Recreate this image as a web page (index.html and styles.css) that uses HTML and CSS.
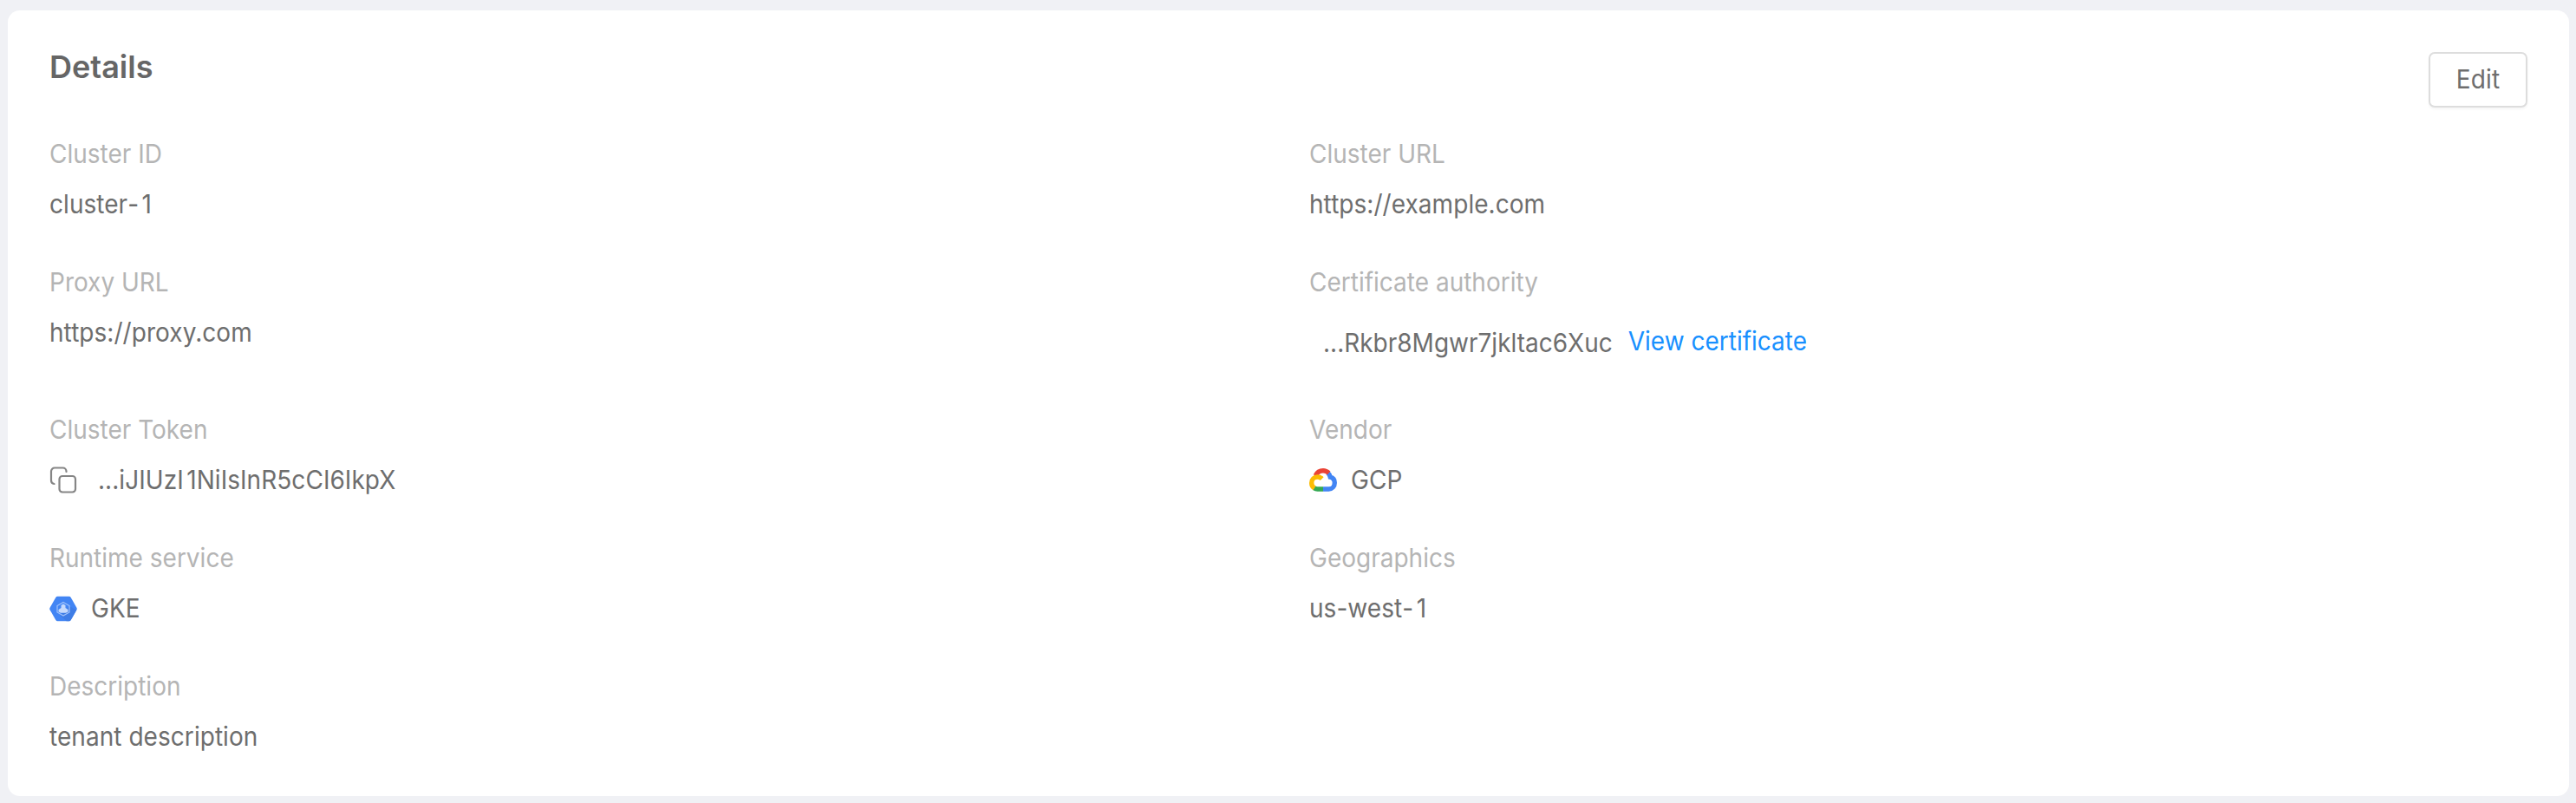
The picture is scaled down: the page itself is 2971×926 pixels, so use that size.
FILE: index.html
```html
<!DOCTYPE html>
<html lang="en">
<head>
<meta charset="utf-8">
<title>Details</title>
<link rel="stylesheet" href="styles.css">
</head>
<body>
<main class="card">
  <header class="card-header">
    <h1 class="title">Details</h1>
    <button class="edit-button" type="button"><span class="edit-label">Edit</span></button>
  </header>
  <dl class="details">
    <div class="field"><dt>Cluster ID</dt><dd><span>cluster<span class="loose">-</span>1</span></dd></div>
    <div class="field"><dt>Cluster URL</dt><dd><span>https://example.com</span></dd></div>
    <div class="field"><dt>Proxy URL</dt><dd><span>https://proxy.com</span></dd></div>
    <div class="field"><dt>Certificate authority</dt><dd class="certificate"><span class="certificate-value">...Rkbr8Mgwr7jkltac6Xuc</span><a class="link">View certificate</a></dd></div>
    <div class="field"><dt>Cluster Token</dt><dd class="token">
      <svg class="copy-icon" width="32" height="32" viewBox="0 0 32 32" fill="none" stroke="#858585" stroke-width="2.2" stroke-linecap="round">
        <path d="M19.500 6V5.500a4 4 0 0 0-4-4H6a4 4 0 0 0-4 4v10.500a4 4 0 0 0 3.500 4"/>
        <rect x="11.500" y="11" width="18.500" height="18.500" rx="3.500"/>
      </svg><span>...iJIUz<span class="loose">I</span>1NiIsInR5cCI6IkpX</span></dd></div>
    <div class="field"><dt>Vendor</dt><dd class="with-logo">
      <svg class="logo" width="32" height="32" viewBox="0 0 32 32" fill="none" stroke-width="5.400">
        <path stroke="#4285f4" d="M21.500 7.200C23 8.600 23.900 10.200 24.300 12.200C27.400 13 29.300 15.700 29.300 18.800C29.300 23 26.400 26 22.500 26H16"/>
        <path stroke="#34a853" d="M16 26H9.500C8 26 6.700 25.500 5.600 24.700"/>
        <path stroke="#ea4335" d="M7.200 10.500C8.900 6.900 12.100 4.700 16 4.700C18.700 4.700 20.700 5.700 22.600 7.500"/>
        <path stroke="#fbbc04" d="M6 24.900C3.900 23.600 2.700 21.400 2.700 18.900C2.700 15 5.700 12 9.500 12C11.500 12 13.100 12.600 14.600 14.200"/>
      </svg><span>GCP</span></dd></div>
    <div class="field"><dt>Runtime service</dt><dd class="with-logo">
      <svg class="logo" width="32" height="32" viewBox="0 0 32 32">
        <path fill="#4285f4" d="M9.300 1.800h13.400q1.300 0 2 1.200l6.700 11.700q.7 1.300 0 2.600L24.700 29q-.7 1.200-2 1.200H9.300q-1.300 0-2-1.200L.6 17.300q-.7-1.300 0-2.600L7.300 3q.7-1.200 2-1.200z"/>
        <path fill="#3f7de6" d="M23 13l8.300 4.500-6.600 11.500q-.7 1.200-2 1.200h-3L12 23.500z"/>
        <path fill="none" stroke="#a0c2fa" stroke-width="1.200" d="M16 8.500l7 4v7.500l-7 4-7-4v-7.500z"/>
        <path fill="#c6dafc" d="M16 10.500l2.500 1.500v3l3 2v2.500l-2.500 1.200h-6l-2.500-1.200V17l3-2v-3z"/>
      </svg><span>GKE</span></dd></div>
    <div class="field"><dt>Geographics</dt><dd><span>us-west<span class="loose">-</span>1</span></dd></div>
    <div class="field"><dt>Description</dt><dd><span>tenant description</span></dd></div>
  </dl>
</main>
</body>
</html>
```
FILE: styles.css
```css
* { box-sizing: border-box; }
body {
  margin: 0;
  padding: 12px 8px 8px 9px;
  height: 926px;
  overflow: hidden;
  background: #f0f1f5;
  color: #6e6e6e;
  font: 400 28px/58px Inter, "Liberation Sans", sans-serif;
}
.card {
  height: 906px;
  padding: 0 48px;
  border-radius: 14px;
  background: #fff;
}
.card-header {
  display: flex;
  justify-content: space-between;
  height: 137px;
}
.title {
  margin: 36px 0 0;
  font-size: 36px;
  line-height: 58px;
  font-weight: 600;
  color: #666;
}
.edit-button {
  width: 114px;
  height: 64px;
  margin-top: 48px;
  padding: 0;
  border: 2px solid #ddd;
  border-radius: 7px;
  background: #fff;
  box-shadow: 0 2px 3px rgba(0, 0, 0, .04);
  color: inherit;
  font: inherit;
  line-height: 58px;
}
.edit-label { display: inline-block; letter-spacing: .2px; }
.details {
  display: grid;
  grid-template-columns: 1fr 1fr;
  gap: 32px 48px;
  margin: 0;
}
.field { height: 116px; }
.field:nth-child(3), .field:nth-child(4) { height: 138px; }
dt { color: #b5b5b5; }
/* Slightly taller letterforms, stretched up from the baseline */
dt, dd > span, .link, .edit-label {
  transform: scaleY(1.07);
  transform-origin: 0 39px;
}
dd { display: flex; margin: 0; white-space: nowrap; letter-spacing: .05px; }
/* Extra room before a narrow digit */
.loose { letter-spacing: 3.5px; }
.certificate { padding: 10px 0 0 16px; letter-spacing: 0; }
.certificate-value { padding-top: 2px; }
.link { margin-left: 18px; color: #1890ff; }
.copy-icon { margin-top: 13px; }
.token { gap: 24px; }
.logo { margin-top: 13px; }
.with-logo { gap: 16px; }
```
